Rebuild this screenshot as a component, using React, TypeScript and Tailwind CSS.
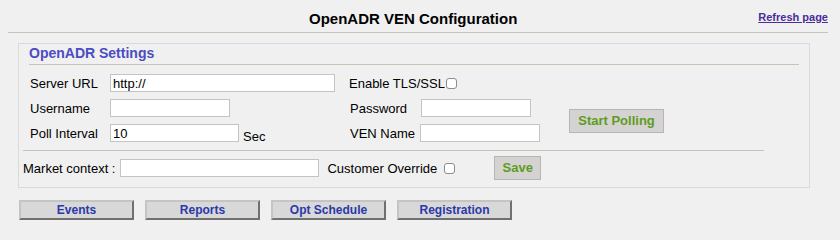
import { useState } from "react";

function Field({ w, value = "" }: { w: string; value?: string }) {
  const [v, setV] = useState(value);
  return (
    <input
      value={v}
      onChange={(e) => setV(e.target.value)}
      className={`${w} block h-[18px] border border-[#c4c4c4] bg-white px-[2px] text-[13px] leading-[16px] text-black outline-none`}
    />
  );
}

function Check() {
  return (
    <input
      type="checkbox"
      className="block h-[11px] w-[11px] appearance-none rounded-[3px] border border-[#8c8c8c] bg-white"
    />
  );
}

function NavButton({ label }: { label: string }) {
  return (
    <button className="h-[20px] w-[115px] border-2 border-t-[#c4c4c4] border-l-[#c4c4c4] border-r-[#707070] border-b-[#707070] bg-[#d8d8d8] text-[12px] font-bold leading-[14px] text-[#2b39a8]">
      {label}
    </button>
  );
}

export default function App() {
  return (
    <div className="h-[240px] w-[840px] bg-[#f0f0f0] font-['Liberation_Sans',Arial,sans-serif] text-[13px] text-black">
      {/* header */}
      <div className="ml-[8px] mr-[12px] flex h-[33px] items-start border-b border-[#c6c6b8] pt-[10px]">
        <h1 className="flex-1 pl-[60px] text-center text-[15px] font-bold leading-[18px]">
          OpenADR VEN Configuration
        </h1>
        <a
          href="#"
          className="mt-[1px] text-[11px] font-bold leading-[13px] text-[#4a2c9c] underline"
        >
          Refresh page
        </a>
      </div>

      {/* settings box */}
      <div className="ml-[18px] mt-[10px] w-[792px] border border-[#dadada] pb-[7px]">
        <div className="mx-[10px] border-b border-[#c6c6b8] pb-[2px] pt-[1px] text-[14px] font-bold leading-[17px] text-[#4b4cc2]">
          OpenADR Settings
        </div>

        <div className="mt-[9px] grid grid-cols-[80px_239px_71px_149px_95px] gap-y-[7px] pl-[11px]">
          <span className="self-center leading-[15px]">Server URL</span>
          <Field w="w-[225px]" value="http://" />
          <div className="col-span-2 flex items-center gap-[1px] leading-[15px]">
            Enable TLS/SSL
            <Check />
          </div>
          <div />

          <span className="self-center leading-[15px]">Username</span>
          <Field w="w-[120px]" />
          <span className="self-center pl-[1px] leading-[15px]">Password</span>
          <div className="pl-[1px]">
            <Field w="w-[110px]" />
          </div>
          <div className="row-span-2 flex items-center">
            <button className="h-[24px] w-[95px] border border-[#b6b6b6] bg-[#d5d2d2] text-[13px] font-bold text-[#5e9c1f]">
              Start Polling
            </button>
          </div>

          <span className="self-center leading-[15px]">Poll Interval</span>
          <div className="flex items-end">
            <Field w="w-[129px]" value="10" />
            <span className="ml-[4px] leading-[11px]">Sec</span>
          </div>
          <span className="self-center pl-[1px] leading-[15px]">VEN Name</span>
          <Field w="w-[120px]" />
        </div>

        <div className="ml-[4px] mt-[8px] w-[741px] border-t border-[#c6c6b8]" />

        <div className="ml-[4px] mt-[5px] flex h-[24px] items-center">
          <span className="leading-[15px]">Market context :</span>
          <div className="ml-[5px]">
            <Field w="w-[199px]" />
          </div>
          <span className="ml-[8px] leading-[15px]">Customer Override</span>
          <div className="ml-[7px] flex items-center">
            <Check />
          </div>
          <button className="ml-[39px] h-[24px] w-[47px] border border-[#b6b6b6] bg-[#d5d2d2] text-[13px] font-bold text-[#5e9c1f]">
            Save
          </button>
        </div>
      </div>

      {/* nav buttons */}
      <div className="ml-[19px] mt-[12px] flex gap-[11px]">
        <NavButton label="Events" />
        <NavButton label="Reports" />
        <NavButton label="Opt Schedule" />
        <NavButton label="Registration" />
      </div>
    </div>
  );
}
